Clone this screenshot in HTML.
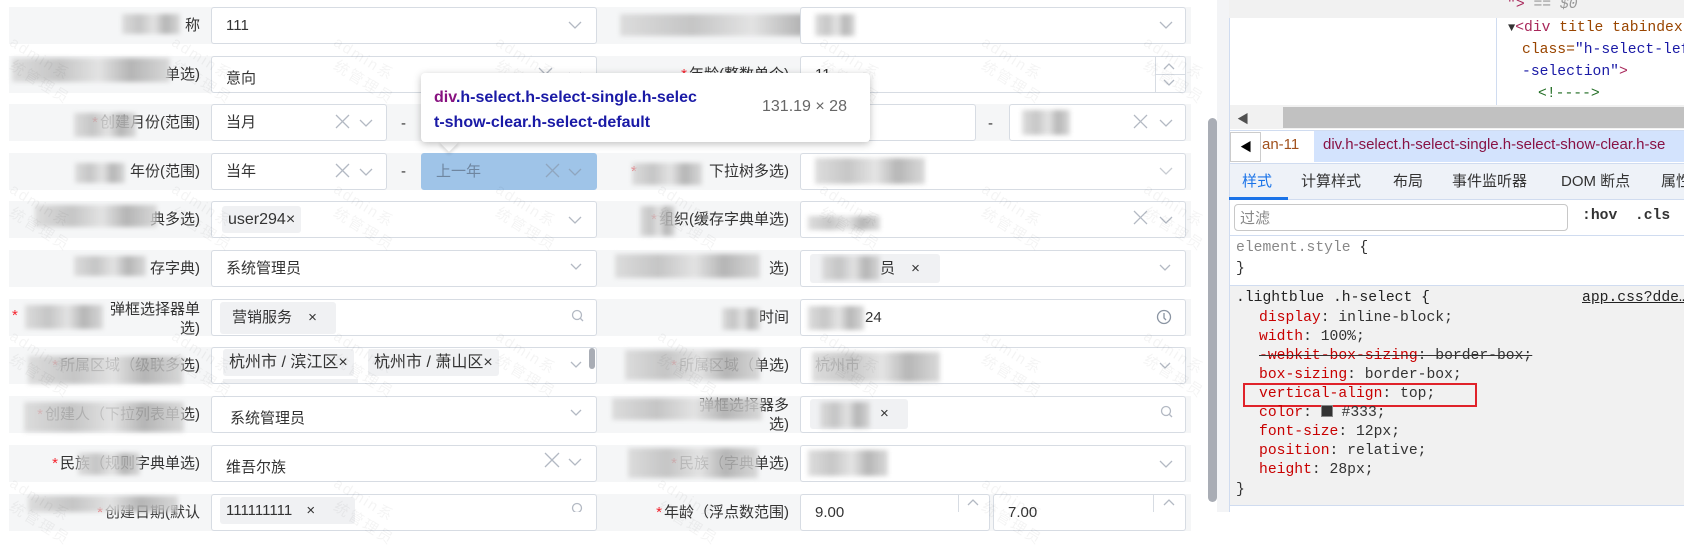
<!DOCTYPE html>
<html><head><meta charset="utf-8">
<style>
*{margin:0;padding:0;box-sizing:border-box}
body{width:1684px;height:512px;overflow:hidden;background:#fff;position:relative;font-family:"Liberation Sans","Noto Sans CJK SC",sans-serif;color:#333}
.a{position:absolute}
.band{position:absolute;left:9px;width:1182px;height:37px;background:#f5f6f7}
.lbl{position:absolute;text-align:right;font-size:15px;color:#333;line-height:37px;white-space:nowrap}
.st{color:#f5222d;margin-right:2px}
.inp{position:absolute;height:37px;border:1px solid #d7dce3;border-radius:3px;background:#fff;font-size:15px;color:#333;line-height:35px;padding-left:14px;white-space:nowrap;overflow:hidden}
.bl{position:absolute;background:linear-gradient(90deg,#d8d8d8,#bdbdbd 30%,#e0e0e0 55%,#aaa 75%,#d4d4d4);filter:blur(2.5px);opacity:.85}
.ic{position:absolute}
.tag{position:absolute;background:#f0f1f3;border-radius:3px;height:27px;line-height:27px;font-size:15px;padding:0 6px;color:#333;white-space:nowrap}
.wm{position:absolute;color:rgba(0,0,0,.045);font-size:15px;transform:rotate(32deg);transform-origin:0 0;line-height:20px;letter-spacing:2px;white-space:nowrap}
.mono{font-family:"Liberation Mono",monospace;font-size:14.7px;white-space:nowrap;position:absolute}
.k{color:#c80000}
.tab{position:absolute;top:163px;line-height:37px;font-size:15px;color:#333;white-space:nowrap}
</style></head><body>

<div class="band" style="top:7px"></div><div class="band" style="top:56px"></div><div class="band" style="top:104px"></div><div class="band" style="top:153px"></div><div class="band" style="top:201px"></div><div class="band" style="top:250px"></div><div class="band" style="top:299px"></div><div class="band" style="top:347px"></div><div class="band" style="top:396px"></div><div class="band" style="top:445px"></div><div class="band" style="top:494px"></div>

<div class="lbl" style="left:0;width:200px;top:7px">称</div><div class="bl" style="left:122px;top:14px;width:58px;height:20px"></div>
<div class="lbl" style="left:0;width:200px;top:56px">单选)</div><div class="bl" style="left:12px;top:58px;width:158px;height:24px"></div>
<div class="lbl" style="left:0;width:200px;top:104px"><span class="st">*</span>创建月份(范围)</div><div class="bl" style="left:74px;top:113px;width:62px;height:24px"></div>
<div class="lbl" style="left:0;width:200px;top:153px">年份(范围)</div><div class="bl" style="left:75px;top:163px;width:50px;height:20px"></div>
<div class="lbl" style="left:0;width:200px;top:201px">典多选)</div><div class="bl" style="left:35px;top:205px;width:122px;height:22px"></div>
<div class="lbl" style="left:0;width:200px;top:250px">存字典)</div><div class="bl" style="left:74px;top:256px;width:72px;height:20px"></div>
<div class="lbl" style="left:0;width:200px;top:299px;line-height:19px;padding-top:1px">弹框选择器单<br>选)</div><div class="a st" style="left:12px;top:307px;font-size:15px">*</div><div class="bl" style="left:25px;top:305px;width:78px;height:24px"></div>
<div class="lbl" style="left:0;width:200px;top:347px"><span class="st">*</span>所属区域（级联多选)</div><div class="bl" style="left:28px;top:356px;width:155px;height:28px"></div>
<div class="lbl" style="left:0;width:200px;top:396px"><span class="st">*</span>创建人（下拉列表单选)</div><div class="bl" style="left:24px;top:402px;width:160px;height:30px"></div>
<div class="lbl" style="left:0;width:200px;top:445px"><span class="st">*</span>民族（规则字典单选)</div><div class="bl" style="left:78px;top:453px;width:62px;height:22px"></div>
<div class="lbl" style="left:0;width:200px;top:494px"><span class="st">*</span>创建日期(默认</div><div class="bl" style="left:28px;top:496px;width:150px;height:16px"></div>

<div class="inp" style="left:211px;top:7px;width:386px">111</div>
<div class="inp" style="left:211px;top:56px;width:386px;padding-top:4px">意向</div>
<div class="inp" style="left:211px;top:104px;width:176px">当月</div>
<div class="a" style="left:401px;top:115px;font-size:15px">-</div>
<div class="inp" style="left:421px;top:104px;width:176px"></div>
<div class="inp" style="left:211px;top:153px;width:176px">当年</div>
<div class="a" style="left:401px;top:163px;font-size:15px">-</div>
<div class="inp" style="left:421px;top:153px;width:176px;background:#9fc4e8;border-color:#9fc4e8;color:#6f86a0">上一年</div>
<div class="inp" style="left:211px;top:201px;width:386px"></div><div class="tag" style="left:222px;top:206px;font-size:16px">user294×</div>
<div class="inp" style="left:211px;top:250px;width:386px">系统管理员</div>
<div class="inp" style="left:211px;top:299px;width:386px"></div><div class="tag" style="left:220px;top:302px;width:116px;height:32px;line-height:32px;padding-left:12px">营销服务 <span style="margin-left:12px">×</span></div>
<div class="inp" style="left:211px;top:347px;width:386px"></div>
<div class="tag" style="left:223px;top:349px;font-size:16px">杭州市 / 滨江区×</div><div class="tag" style="left:368px;top:349px;font-size:16px">杭州市 / 萧山区×</div>
<div class="a" style="left:223px;top:379px;width:135px;height:4px;background:#f0f1f3"></div>
<div class="a" style="left:589px;top:348px;width:6px;height:21px;border-radius:3px;background:#a9adb5"></div>
<div class="inp" style="left:211px;top:396px;width:386px;padding-left:18px;padding-top:4px">系统管理员</div>
<div class="inp" style="left:211px;top:445px;width:386px;padding-top:4px">维吾尔族</div>
<div class="inp" style="left:211px;top:494px;width:386px"></div><div class="tag" style="left:220px;top:497px;width:135px">111111111 <span style="margin-left:10px">×</span></div>

<div class="bl" style="left:620px;top:14px;width:240px;height:22px"></div>
<div class="lbl" style="left:600px;width:189px;top:56px"><span class="st">*</span>年龄(整数单个)</div>
<div class="lbl" style="left:600px;width:189px;top:153px"><span class="st">*</span><span style="display:inline-block;width:70px"></span>下拉树多选)</div><div class="bl" style="left:632px;top:163px;width:70px;height:22px"></div>
<div class="lbl" style="left:600px;width:189px;top:201px"><span class="st">*</span>组织(缓存字典单选)</div><div class="bl" style="left:640px;top:206px;width:35px;height:30px"></div>
<div class="lbl" style="left:600px;width:189px;top:250px">选)</div><div class="bl" style="left:615px;top:254px;width:145px;height:24px"></div>
<div class="lbl" style="left:600px;width:189px;top:299px">时间</div><div class="bl" style="left:722px;top:308px;width:38px;height:22px"></div>
<div class="lbl" style="left:600px;width:189px;top:347px"><span class="st">*</span>所属区域（单选)</div><div class="bl" style="left:625px;top:350px;width:135px;height:30px"></div>
<div class="lbl" style="left:600px;width:189px;top:396px;line-height:19px;padding-top:0">弹框选择器多<br>选)</div><div class="bl" style="left:612px;top:398px;width:150px;height:22px"></div>
<div class="lbl" style="left:600px;width:189px;top:445px"><span class="st">*</span>民族（字典单选)</div><div class="bl" style="left:628px;top:448px;width:130px;height:30px"></div>
<div class="lbl" style="left:600px;width:189px;top:494px"><span class="st">*</span>年龄（浮点数范围)</div>

<div class="inp" style="left:800px;top:7px;width:386px"></div><div class="bl" style="left:815px;top:14px;width:40px;height:22px"></div>
<div class="inp" style="left:800px;top:56px;width:386px">11</div><div class="a" style="left:1155px;top:57px;width:1px;height:35px;background:#d7dce3"></div><div class="a" style="left:1155px;top:74px;width:31px;height:1px;background:#d7dce3"></div>
<div class="inp" style="left:800px;top:104px;width:176px"></div>
<div class="a" style="left:988px;top:115px;font-size:15px">-</div>
<div class="inp" style="left:1009px;top:104px;width:177px"></div><div class="bl" style="left:1022px;top:110px;width:48px;height:25px"></div>
<div class="inp" style="left:800px;top:153px;width:386px"></div><div class="bl" style="left:815px;top:158px;width:110px;height:26px"></div>
<div class="inp" style="left:800px;top:201px;width:386px"></div><div class="bl" style="left:808px;top:216px;width:72px;height:14px"></div>
<div class="inp" style="left:800px;top:250px;width:386px"></div><div class="tag" style="left:810px;top:254px;width:130px;height:29px;line-height:29px;padding-left:70px">员 <span style="margin-left:12px">×</span></div><div class="bl" style="left:822px;top:256px;width:58px;height:24px"></div>
<div class="inp" style="left:800px;top:299px;width:386px;padding-left:64px">24</div><div class="bl" style="left:808px;top:306px;width:56px;height:24px"></div>
<div class="inp" style="left:800px;top:347px;width:386px">杭州市</div><div class="bl" style="left:812px;top:352px;width:128px;height:30px"></div>
<div class="inp" style="left:800px;top:396px;width:386px"></div><div class="tag" style="left:810px;top:399px;width:98px;height:30px;line-height:30px;padding-left:70px">×</div><div class="bl" style="left:820px;top:402px;width:50px;height:26px"></div>
<div class="inp" style="left:800px;top:445px;width:386px"></div><div class="bl" style="left:808px;top:450px;width:80px;height:26px"></div>
<div class="inp" style="left:800px;top:494px;width:190px">9.00</div><div class="a" style="left:958px;top:494px;width:1px;height:18px;background:#d7dce3"></div>
<div class="inp" style="left:993px;top:494px;width:193px">7.00</div><div class="a" style="left:1153px;top:494px;width:1px;height:18px;background:#d7dce3"></div>

<svg class="ic" style="left:0;top:0" width="1200" height="512" fill="none" stroke="#b3b9c3" stroke-width="1.3">
<path d="M569 22l6 6 6-6"/>
<path d="M569 73l6 6 6-6"/><path d="M539 68l13 13M552 68l-13 13"/>
<path d="M360 120l6 6 6-6"/><path d="M336 115l13 13M349 115l-13 13"/>
<path d="M360 169l6 6 6-6"/><path d="M336 164l13 13M349 164l-13 13"/>
<path d="M569 169l6 6 6-6" stroke="#8fa6bf"/><path d="M546 164l13 13M559 164l-13 13" stroke="#8fa6bf"/>
<path d="M569 217l6 6 6-6"/>
<path d="M571 264l5 5 5-5"/>
<circle cx="577" cy="315" r="4.5"/><path d="M580 318l3 3"/>
<path d="M571 362l5 5 5-5"/>
<path d="M571 410l5 5 5-5"/>
<path d="M569 459l6 6 6-6"/><path d="M545 453l14 14M559 453l-14 14"/>
<circle cx="577" cy="508" r="4.5"/>
<path d="M1160 22l6 6 6-6"/>
<path d="M1164 69l5-5 5 5M1164 80l5 5 5-5"/>
<path d="M1160 120l6 6 6-6"/><path d="M1134 115l13 13M1147 115l-13 13"/>
<path d="M1160 168l6 6 6-6" stroke="#c8ccd2"/>
<path d="M1160 217l6 6 6-6"/><path d="M1134 211l13 13M1147 211l-13 13"/>
<path d="M1160 265l5 5 5-5"/>
<circle cx="1164" cy="317" r="6.5" stroke="#8a94a2"/><path d="M1164 313v5l2 2" stroke="#8a94a2"/>
<path d="M1160 363l5 5 5-5"/>
<circle cx="1166" cy="411" r="4.5"/><path d="M1169 414l3 3"/>
<path d="M1160 461l6 6 6-6"/>
<path d="M968 505l5-5 5 5M1164 505l5-5 5 5"/>
</svg>

<div class="wm" style="left:16px;top:33px">admin系<br>&nbsp;&nbsp;统管理员</div>
<div class="wm" style="left:178px;top:33px">admin系<br>&nbsp;&nbsp;统管理员</div>
<div class="wm" style="left:340px;top:33px">admin系<br>&nbsp;&nbsp;统管理员</div>
<div class="wm" style="left:502px;top:33px">admin系<br>&nbsp;&nbsp;统管理员</div>
<div class="wm" style="left:826px;top:33px">admin系<br>&nbsp;&nbsp;统管理员</div>
<div class="wm" style="left:988px;top:33px">admin系<br>&nbsp;&nbsp;统管理员</div>
<div class="wm" style="left:1150px;top:33px">admin系<br>&nbsp;&nbsp;统管理员</div>
<div class="wm" style="left:16px;top:180px">admin系<br>&nbsp;&nbsp;统管理员</div>
<div class="wm" style="left:178px;top:180px">admin系<br>&nbsp;&nbsp;统管理员</div>
<div class="wm" style="left:340px;top:180px">admin系<br>&nbsp;&nbsp;统管理员</div>
<div class="wm" style="left:502px;top:180px">admin系<br>&nbsp;&nbsp;统管理员</div>
<div class="wm" style="left:664px;top:180px">admin系<br>&nbsp;&nbsp;统管理员</div>
<div class="wm" style="left:826px;top:180px">admin系<br>&nbsp;&nbsp;统管理员</div>
<div class="wm" style="left:988px;top:180px">admin系<br>&nbsp;&nbsp;统管理员</div>
<div class="wm" style="left:1150px;top:180px">admin系<br>&nbsp;&nbsp;统管理员</div>
<div class="wm" style="left:16px;top:327px">admin系<br>&nbsp;&nbsp;统管理员</div>
<div class="wm" style="left:178px;top:327px">admin系<br>&nbsp;&nbsp;统管理员</div>
<div class="wm" style="left:340px;top:327px">admin系<br>&nbsp;&nbsp;统管理员</div>
<div class="wm" style="left:502px;top:327px">admin系<br>&nbsp;&nbsp;统管理员</div>
<div class="wm" style="left:664px;top:327px">admin系<br>&nbsp;&nbsp;统管理员</div>
<div class="wm" style="left:826px;top:327px">admin系<br>&nbsp;&nbsp;统管理员</div>
<div class="wm" style="left:988px;top:327px">admin系<br>&nbsp;&nbsp;统管理员</div>
<div class="wm" style="left:1150px;top:327px">admin系<br>&nbsp;&nbsp;统管理员</div>
<div class="wm" style="left:16px;top:474px">admin系<br>&nbsp;&nbsp;统管理员</div>
<div class="wm" style="left:340px;top:474px">admin系<br>&nbsp;&nbsp;统管理员</div>
<div class="wm" style="left:664px;top:474px">admin系<br>&nbsp;&nbsp;统管理员</div>
<div class="wm" style="left:988px;top:474px">admin系<br>&nbsp;&nbsp;统管理员</div>

<div class="a" style="left:442px;top:135px;width:14px;height:14px;background:#fff;transform:rotate(45deg);box-shadow:2px 2px 3px rgba(0,0,0,.12)"></div>
<div class="a" style="left:421px;top:73px;width:449px;height:69px;background:#fff;border-radius:4px;box-shadow:0 2px 8px rgba(0,0,0,.25)"></div>
<div class="a" style="left:434px;top:85px;font-size:16px;font-weight:bold;line-height:25px;color:#1a1aa6;white-space:nowrap"><span style="color:#881280">div</span>.h-select.h-select-single.h-selec<br>t-show-clear.h-select-default</div>
<div class="a" style="left:762px;top:98px;font-size:16px;color:#666;white-space:nowrap">131.19 × 28</div>

<div class="a" style="left:1217px;top:0;width:12px;height:512px;background:#f3f4f6"></div>
<div class="a" style="left:1208px;top:118px;width:9px;height:384px;border-radius:5px;background:#a9adb5"></div>

<div class="a" style="left:1229px;top:0;width:455px;height:512px;background:#fff;border-left:1px solid #d0dcf0"></div>
<div class="a" style="left:1229px;top:0;width:455px;height:18px;background:#f1f1f1"></div>
<div class="a" style="left:1496px;top:18px;width:1px;height:87px;background:#d0dcf0"></div>
<div class="mono" style="left:1507px;top:-3px;color:#999;font-style:italic"><span style="color:#a8275a;font-style:normal">"&gt;</span> == $0</div>
<div class="mono" style="left:1508px;top:20px;color:#a8275a"><span style="color:#333;font-size:12px">▼</span>&lt;div <span style="color:#994500">title tabindex</span></div>
<div class="mono" style="left:1522px;top:42px;color:#994500">class=<span style="color:#1a1aa6">"h-select-left</span></div>
<div class="mono" style="left:1522px;top:64px;color:#1a1aa6">-selection"<span style="color:#a8275a">&gt;</span></div>
<div class="mono" style="left:1538px;top:86px;color:#236e25">&lt;!----&gt;</div>
<div class="a" style="left:1230px;top:105px;width:454px;height:24px;background:#f1f1f1"></div>
<div class="a" style="left:1283px;top:107px;width:401px;height:21px;background:#c1c1c1"></div>
<div class="a" style="left:1237px;top:110px;font-size:12px;color:#505050">◀</div>
<div class="a" style="left:1230px;top:130px;width:454px;height:33px;background:#fff;border-top:1px solid #d0dcf0"></div>
<div class="a" style="left:1314px;top:131px;width:370px;height:31px;background:#d3e3fd"></div>
<div class="a" style="left:1230px;top:132px;width:31px;height:30px;background:#fff;border:1px solid #ccc"></div>
<div class="a" style="left:1240px;top:138px;font-size:12px;color:#000">◀</div>
<div class="a" style="left:1262px;top:136px;font-size:15px;color:#a0501c;white-space:nowrap">an-11</div>
<div class="a" style="left:1323px;top:136px;font-size:15px;color:#881244;white-space:nowrap">div.h-select.h-select-single.h-select-show-clear.h-se</div>
<div class="a" style="left:1230px;top:163px;width:454px;height:37px;background:#eef2f8;border-top:1px solid #d0dcf0;border-bottom:1px solid #d0dcf0"></div>
<div class="tab" style="left:1242px;color:#1a73e8">样式</div>
<div class="a" style="left:1229px;top:197px;width:59px;height:3px;background:#1a73e8"></div>
<div class="tab" style="left:1301px">计算样式</div>
<div class="tab" style="left:1393px">布局</div>
<div class="tab" style="left:1452px">事件监听器</div>
<div class="tab" style="left:1561px">DOM 断点</div>
<div class="tab" style="left:1661px">属性</div>
<div class="a" style="left:1234px;top:204px;width:334px;height:27px;border:1px solid #c8c8c8;border-radius:4px"></div>
<div class="a" style="left:1240px;top:207px;font-size:15px;color:#888">过滤</div>
<div class="mono" style="left:1582px;top:208px;font-weight:bold;color:#333;background:#fff;padding-right:20px">:hov&nbsp;&nbsp;.cls</div>
<div class="a" style="left:1230px;top:235px;width:454px;height:1px;background:#d0dcf0"></div>
<div class="mono" style="left:1236px;top:240px;color:#888">element.style <span style="color:#333">{</span></div>
<div class="mono" style="left:1236px;top:261px;color:#333">}</div>
<div class="a" style="left:1230px;top:285px;width:454px;height:221px;background:#f1f1f1;border-top:1px solid #d0dcf0;border-bottom:1px solid #d0dcf0"></div>
<div class="mono" style="left:1236px;top:290px;color:#222">.lightblue .h-select {</div>
<div class="mono" style="left:1582px;top:290px;color:#222;text-decoration:underline">app.css?dde…</div>
<div class="mono" style="left:1259px;top:310px"><span class="k">display</span>: inline-block;</div>
<div class="mono" style="left:1259px;top:329px"><span class="k">width</span>: 100%;</div>
<div class="mono" style="left:1259px;top:348px;text-decoration:line-through"><span class="k">-webkit-box-sizing</span>: border-box;</div>
<div class="mono" style="left:1259px;top:367px"><span class="k">box-sizing</span>: border-box;</div>
<div class="mono" style="left:1259px;top:386px"><span class="k">vertical-align</span>: top;</div>
<div class="a" style="left:1243px;top:383px;width:234px;height:24px;border:2px solid #e0222a"></div>
<div class="mono" style="left:1259px;top:405px"><span class="k">color</span>: <span style="display:inline-block;width:12px;height:12px;background:#333;border:1px solid #888;vertical-align:-1px"></span> #333;</div>
<div class="mono" style="left:1259px;top:424px"><span class="k">font-size</span>: 12px;</div>
<div class="mono" style="left:1259px;top:443px"><span class="k">position</span>: relative;</div>
<div class="mono" style="left:1259px;top:462px"><span class="k">height</span>: 28px;</div>
<div class="mono" style="left:1236px;top:482px">}</div>
</body></html>
